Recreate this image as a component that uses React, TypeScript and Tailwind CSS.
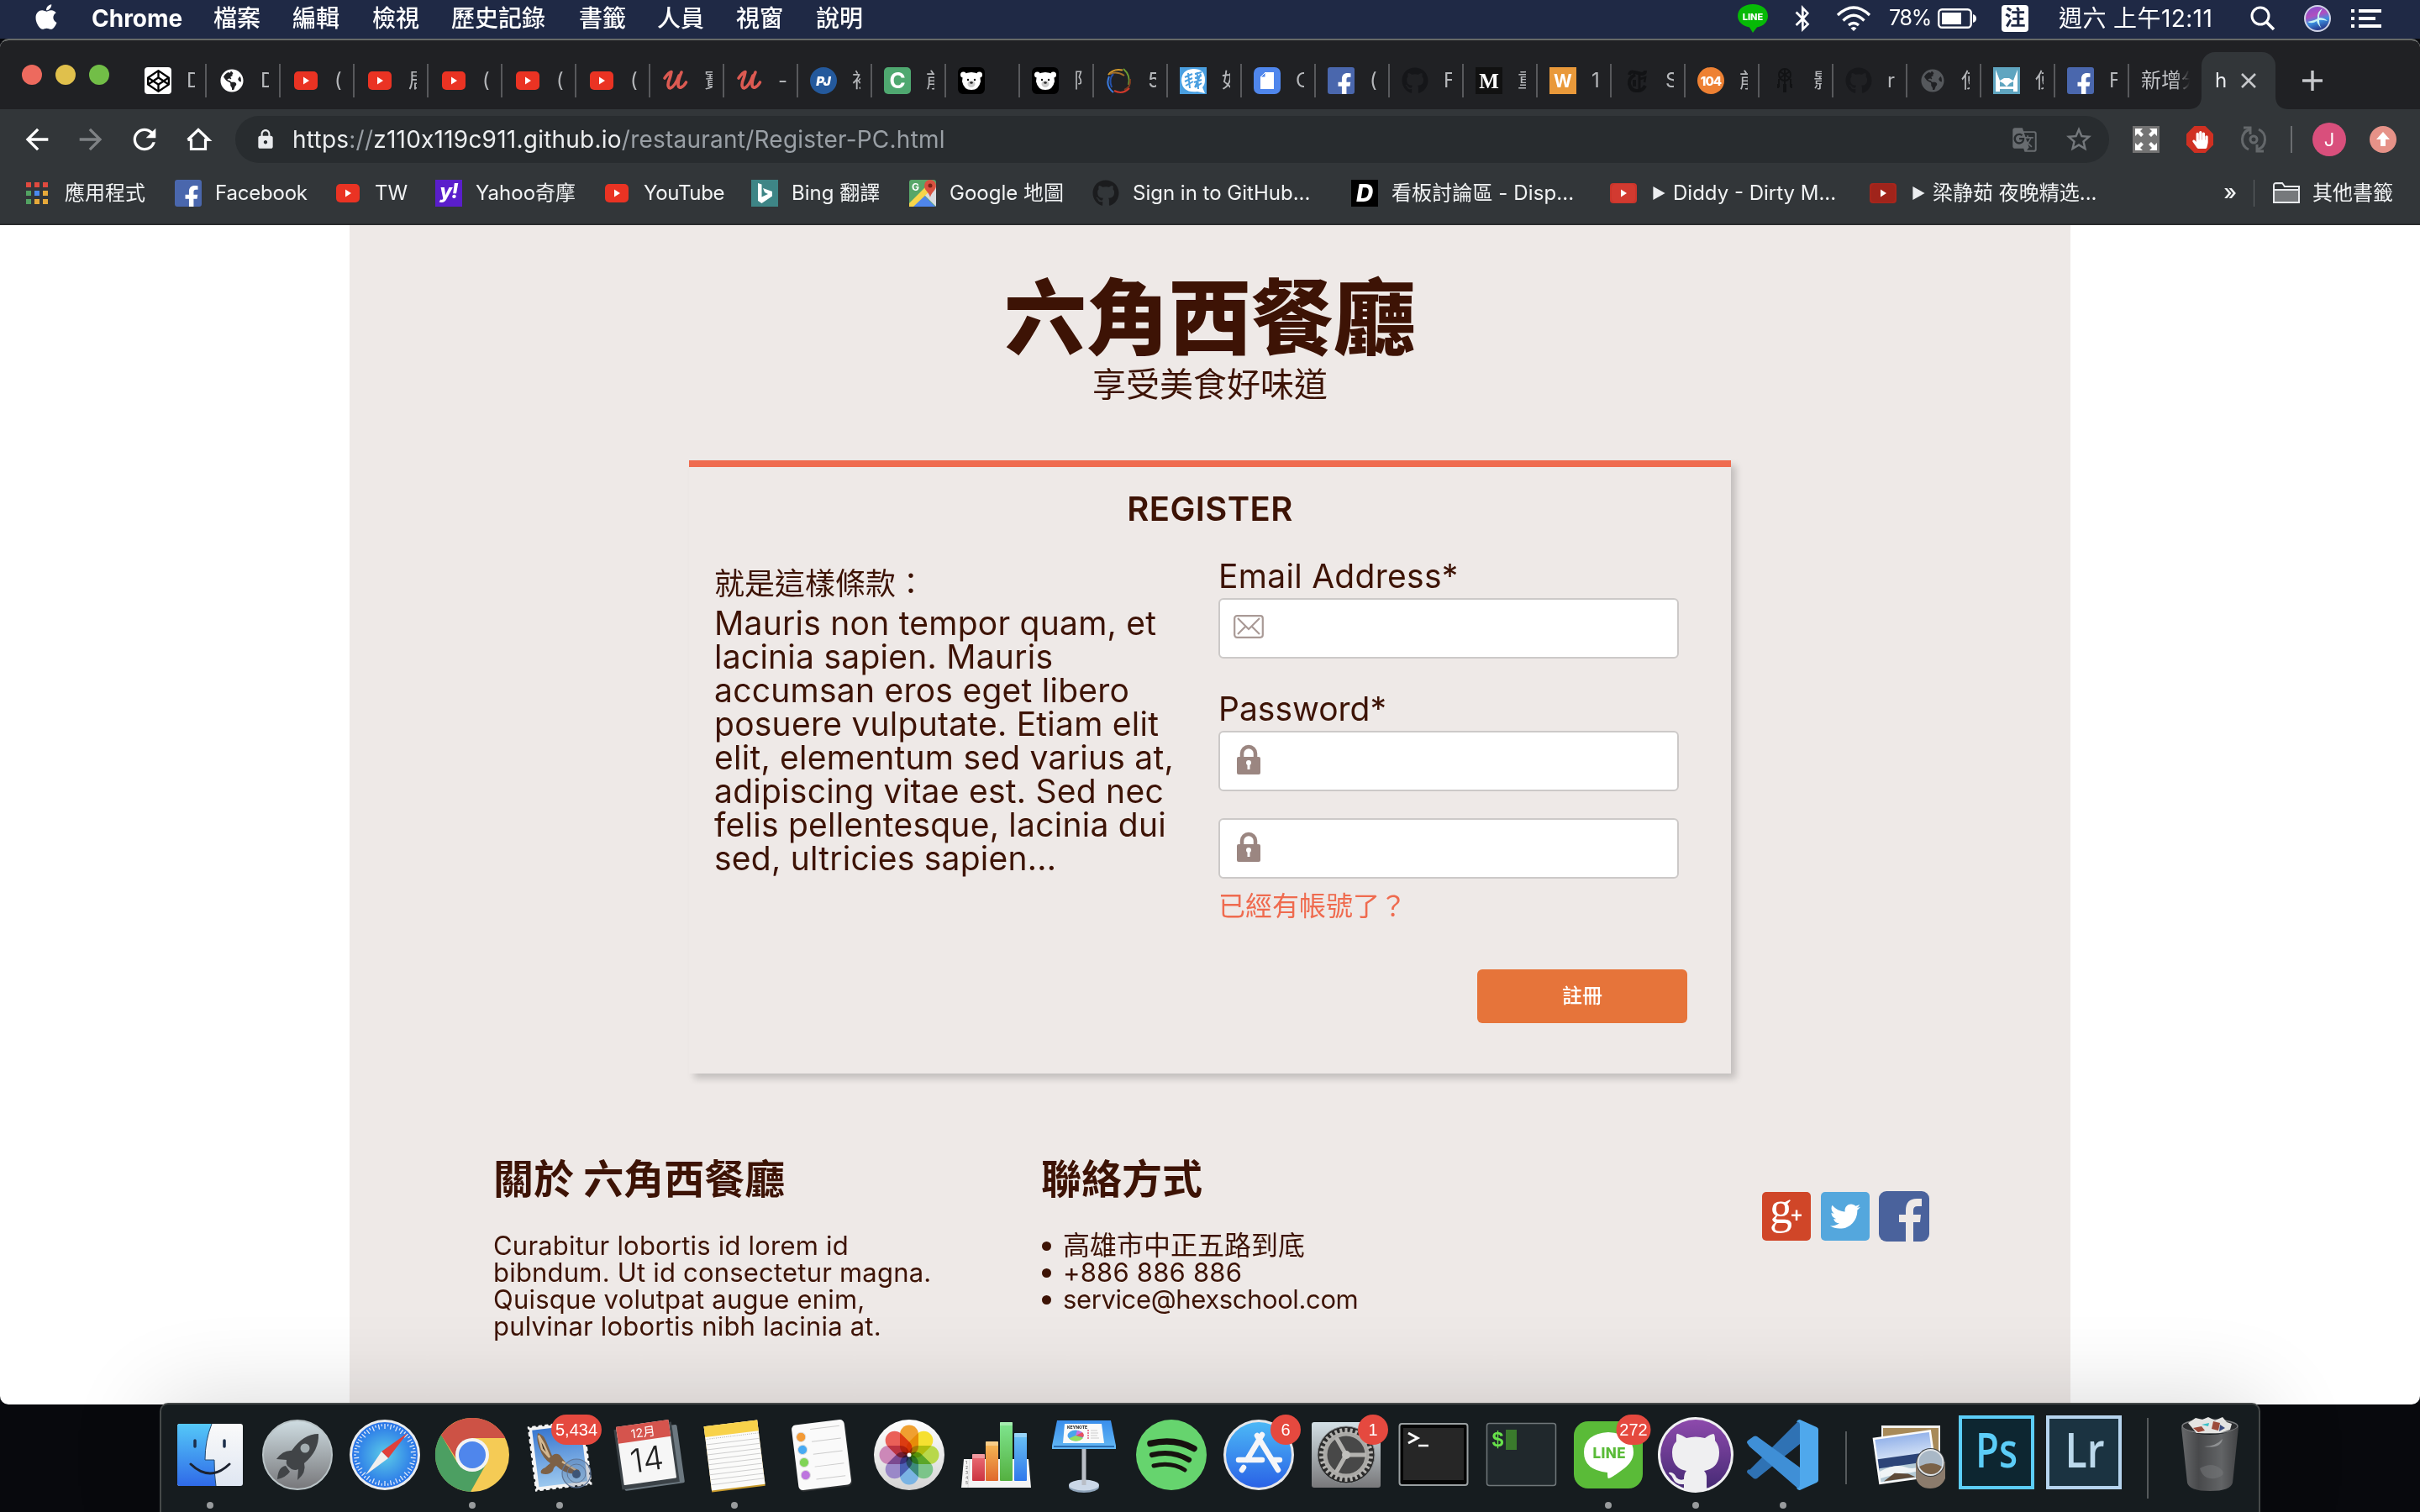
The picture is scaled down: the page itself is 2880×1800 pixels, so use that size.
import type { ReactNode } from "react";
import {
  FaApple,
  FaBluetoothB,
  FaCodepen,
  FaFacebookF,
  FaGithub,
  FaGlobeAmericas,
  FaHandPaper,
  FaTwitter,
} from "react-icons/fa";
import { MdArrowBack, MdArrowForward, MdGTranslate, MdLock, MdRefresh, MdStarBorder } from "react-icons/md";

/* ---------- small shared marks ---------- */

const YouTube = ({ fill = "#ea3323" }: { fill?: string }) => (
  <svg viewBox="0 0 28 22" className="h-[22px] w-[28px]">
    <rect width="28" height="22" rx="5" fill={fill} />
    <path d="M11 6.500v9l7-4.500z" fill="#fff" />
  </svg>
);

const FacebookMark = () => (
  <div className="flex h-8 w-8 items-end justify-center overflow-hidden rounded-[3px] bg-[#4a67ad]">
    <FaFacebookF className="-mb-[3px] ml-2 size-[28px] text-white" />
  </div>
);

const Bear = () => (
  <svg viewBox="0 0 32 32" className="size-8">
    <rect width="32" height="32" rx="6" fill="#000" />
    <circle cx="6.500" cy="9" r="3.500" fill="#fff" />
    <circle cx="25.500" cy="9" r="3.500" fill="#fff" />
    <path d="M6 9q10-6 20 0l1 8q-2 10-11 10T5 17z" fill="#fff" />
    <circle cx="12" cy="15" r="1.200" />
    <circle cx="20" cy="15" r="1.200" />
    <ellipse cx="16" cy="20" rx="4.500" ry="4" fill="#ccc" />
    <ellipse cx="16" cy="18.500" rx="1.800" ry="1.300" fill="#222" />
  </svg>
);

const Udemy = () => (
  <svg viewBox="0 0 32 32" className="size-8" fill="none" stroke="#dc5a52" strokeLinecap="round" strokeLinejoin="round">
    <path d="M3 13q5-7 8-7.500-1 6-3.500 12-1.500 7 2 7.500 6-2 10.500-15" strokeWidth="3.600" />
    <path d="M23 6q-4 9-4 15 .5 4 3.500 3 3.500-1.500 6-6" strokeWidth="3.600" />
  </svg>
);

const Letter = ({ c, cls }: { c: string; cls: string }) => (
  <span className={"flex h-8 w-8 items-center justify-center leading-none " + cls}>{c}</span>
);

const tabs: { icon: ReactNode; t: string }[] = [
  { icon: <div className="flex size-8 items-center justify-center rounded-[4px] bg-white"><FaCodepen className="size-[27px] text-black" /></div>, t: "D" },
  { icon: <FaGlobeAmericas className="size-[28px] text-white" />, t: "D" },
  { icon: <YouTube />, t: "(" },
  { icon: <YouTube />, t: "居" },
  { icon: <YouTube />, t: "(" },
  { icon: <YouTube />, t: "(" },
  { icon: <YouTube />, t: "(" },
  { icon: <Udemy />, t: "寶" },
  { icon: <Udemy />, t: "-" },
  { icon: <Letter c="PJ" cls="rounded-full bg-[#24599c] text-[15px] font-black italic text-white" />, t: "初" },
  { icon: <Letter c="C" cls="rounded-[5px] bg-[#4fa870] text-[26px] font-bold text-white" />, t: "前" },
  { icon: <Bear />, t: "" },
  { icon: <Bear />, t: "限" },
  {
    icon: (
      <svg viewBox="0 0 32 32" className="size-8" fill="none" strokeWidth="2">
        <path d="M3 9Q9 1 20 3.500" stroke="#d59b2c" />
        <path d="M5 8Q13 4 22 10" stroke="#a3702a" />
        <path d="M21 2q9 8 6 19" stroke="#6b9b32" />
        <path d="M29 14q1 10-7 13" stroke="#7a3a20" />
        <path d="M28 25q-8 8-18 3" stroke="#d0392b" />
        <path d="M9 30Q-1 22 4 11" stroke="#3a7be0" />
        <path d="M7 24Q3 14 9 8" stroke="#2450a8" />
      </svg>
    ),
    t: "5",
  },
  {
    icon: (
      <svg viewBox="0 0 32 32" className="size-8">
        <rect width="32" height="32" fill="#4a9fe0" />
        <path d="M2 16Q2 3 16 2q14 0 14 13 0 6-3 9l3 7-9-2Q3 31 2 16z" fill="#fff" />
        <g stroke="#4a9fe0" strokeWidth="2" fill="none">
          <path d="M6 12l9-4M6 17l9-4M7 22l9-5M10 7l2 18M18 8l8-2M18 13l8-3M17 18l9-3M18 24l8-5M21 6l1 20M25 8l-7 16" />
        </g>
      </svg>
    ),
    t: "如",
  },
  {
    icon: (
      <svg viewBox="0 0 32 32" className="size-8">
        <rect width="32" height="32" rx="7" fill="#4f86ec" />
        <path d="M14 6h10v20H8V12z" fill="#fff" />
        <path d="M8 12l6-6v6z" fill="#4f86ec" stroke="#fff" />
      </svg>
    ),
    t: "C",
  },
  { icon: <FacebookMark />, t: "(" },
  { icon: <FaGithub className="size-8 text-[#151619]" />, t: "F" },
  { icon: <Letter c="M" cls="bg-[#111] font-['Liberation_Serif',serif] text-[25px] font-bold text-white" />, t: "重" },
  { icon: <Letter c="W" cls="bg-[#e9993a] text-[21px] font-bold text-white" />, t: "1" },
  {
    icon: (
      <svg viewBox="0 0 32 32" className="size-8" fill="none" stroke="#121315" strokeWidth="4">
        <path d="M7 9q1-5 6-3l9 2q4 0 4-4" />
        <path d="M14 9q-8 4-7 11 2 9 10 8 6 0 9-6M13 15v8" />
        <path d="M19 8v20" strokeWidth="3" />
        <path d="M20 14l6-2-1 6" strokeWidth="2.500" />
      </svg>
    ),
    t: "S",
  },
  { icon: <Letter c="104" cls="rounded-full bg-[#ee8133] text-[15px] font-extrabold tracking-[-1px] text-white" />, t: "前" },
  {
    icon: (
      <svg viewBox="0 0 32 32" className="size-8" fill="none" stroke="#121315" strokeWidth="2">
        <circle cx="16" cy="9" r="7" />
        <path d="M10 5l12 8M10 13l12-8M16 2v28M9 14v10M23 14v10M8 20v5M24 20v5" />
        <path d="M16 20v10" strokeWidth="4" />
      </svg>
    ),
    t: "影",
  },
  { icon: <FaGithub className="size-8 text-[#17181b]" />, t: "r" },
  { icon: <FaGlobeAmericas className="size-[28px] text-[#55585c]" />, t: "使" },
  {
    icon: (
      <svg viewBox="0 0 32 32" className="size-8">
        <rect width="32" height="32" fill="#5fa5c0" />
        <path d="M3 3l5 13 5-3h6l5 3 5-13v26h-5v-3H8v3H3z" fill="#fff" />
        <path d="M8 17l4 2 4 4 4-4 4-2v6H8z" fill="#5fa5c0" />
      </svg>
    ),
    t: "使",
  },
  { icon: <FacebookMark />, t: "F" },
];

const menus: [string, string][] = [
  ["檔案", "w-[94px]"],
  ["編輯", "w-[95px]"],
  ["檢視", "w-[94px]"],
  ["歷史記錄", "w-[152px]"],
  ["書籤", "w-[93px]"],
  ["人員", "w-[94px]"],
  ["視窗", "w-[95px]"],
  ["說明", "w-[94px]"],
];

function MenuBar() {
  return (
    <header className="flex h-[46px] items-center bg-[#1f2945] pb-[2px] text-[28px] font-medium whitespace-nowrap text-white">
      <div className="w-[109px] pl-[40px]">
        <FaApple className="-mt-1 size-[34px] -translate-x-[2px]" />
      </div>
      <div className="w-[145px] font-bold">Chrome</div>
      {menus.map(([m, w]) => (
        <div key={m} className={w}>{m}</div>
      ))}
      <div className="grow" />
      <svg viewBox="0 0 36 36" className="mr-[28px] size-9">
        <path d="M18 1C8 1 0 6.500 0 15c0 7 6 12 14 13.500L18 35l5-6.500C31 27 36 22 36 15 36 6.500 28 1 18 1z" fill="#06b906" />
        <text x="18" y="19.500" textAnchor="middle" fontSize="11" fontWeight="800" fill="#fff">LINE</text>
      </svg>
      <FaBluetoothB className="mr-[27px] h-[32px] w-[26px]" />
      <svg viewBox="0 0 42 32" className="mr-[21px] h-8 w-[42px]" fill="none" stroke="#fff" strokeWidth="3.400">
        <path d="M2 12Q21-6 40 12M8.500 18.500Q21 6 33.500 18.500M15 24q6-5 12 0" />
        <path d="M17.500 27.500q3.500-3 7 0L21 31z" fill="#fff" stroke="none" />
      </svg>
      <span className="w-[58px] text-[25px] font-normal tracking-[-1.300px]">78%</span>
      <svg viewBox="0 0 46 24" className="mr-[30px] h-6 w-[46px]">
        <rect x="1.200" y="1.200" width="38.500" height="21.600" rx="4" fill="none" stroke="#fff" strokeWidth="2.400" />
        <rect x="5" y="5" width="23" height="14" fill="#fff" />
        <path d="M42 7q4 1 4 5t-4 5z" fill="#fff" />
      </svg>
      <span className="mr-[36px] flex h-8 w-8 items-center justify-center rounded-[4px] bg-white text-[25px] font-bold text-[#1f2945]">注</span>
      <span className="w-[228px] font-normal tracking-[0.400px]">週六 上午12:11</span>
      <svg viewBox="0 0 30 30" className="mr-[34px] size-[30px]" fill="none" stroke="#fff" strokeWidth="3">
        <circle cx="12" cy="12" r="10" />
        <path d="M19 19l9 9" strokeWidth="3.600" />
      </svg>
      <svg viewBox="0 0 32 32" className="mr-[24px] size-8">
        <defs>
          <linearGradient id="siri" x1="0" y1="0" x2="0.300" y2="1">
            <stop offset="0" stopColor="#7a4fd0" />
            <stop offset="0.450" stopColor="#b04fc0" />
            <stop offset="0.700" stopColor="#3a8fe0" />
            <stop offset="1" stopColor="#2a3f90" />
          </linearGradient>
        </defs>
        <circle cx="16" cy="16" r="15" fill="url(#siri)" stroke="#cfd3e6" strokeWidth="2" />
        <path d="M4 20q10-2 12-4Q15 8 22 4q-5 8-4 11 6 0 10 4-8-2-10-1 0 6 3 10-5-5-6-9-5 4-11 1z" fill="#c8f4f4" />
      </svg>
      <svg viewBox="0 0 36 22" className="mr-[46px] h-[22px] w-9" fill="#fff">
        <path d="M0 0h4v4H0zM9 0h27v4H9zM0 9h4v4H0zM9 9h20v4H9zM0 18h4v4H0zM9 18h27v4H9z" />
      </svg>
    </header>
  );
}

function TabStrip() {
  return (
    <div className="flex h-[82px] bg-[#202124] pt-[14px]">
      <div className="flex w-[158px] gap-4 pt-[15px] pl-[26px]">
        <i className="size-6 rounded-full bg-[#ed6a5e]" />
        <i className="size-6 rounded-full bg-[#e0c04c]" />
        <i className="size-6 rounded-full bg-[#72be47]" />
      </div>
      {tabs.map((t, i) => (
        <div key={i} className="flex h-[68px] w-[88px] items-center">
          <div className="flex w-[64px] items-center pl-[14px]">
            <div className="flex h-8 w-8 shrink-0 items-center justify-center">{t.icon}</div>
          </div>
          <div className="w-[10px] overflow-hidden text-[24px] whitespace-nowrap text-[#b5b7ba]">{t.t}</div>
          <div className="ml-[12px] h-10 w-[2px] bg-[#58595c]" />
        </div>
      ))}
      <div className="flex w-[86px] items-center pl-[14px]">
        <div className="w-[58px] overflow-hidden bg-gradient-to-r from-[#c4c6c9] from-70% to-transparent bg-clip-text text-[24px] whitespace-nowrap text-transparent">新增分</div>
      </div>
      <div className="relative flex w-[88px] items-center rounded-t-[16px] bg-[#323639]">
        <svg viewBox="0 0 16 16" className="absolute bottom-0 -left-4 size-4"><path d="M16 0v16H0Q16 16 16 0z" fill="#323639" /></svg>
        <svg viewBox="0 0 16 16" className="absolute -right-4 bottom-0 size-4"><path d="M0 0v16h16Q0 16 0 0z" fill="#323639" /></svg>
        <span className="ml-4 w-[31px] text-[24px] text-[#e8eaed]">h</span>
        <svg viewBox="0 0 18 18" className="size-[18px]" stroke="#c6c8cb" strokeWidth="2.600"><path d="M1 1l16 16M17 1L1 17" /></svg>
      </div>
      <svg viewBox="0 0 24 24" className="mt-[22px] ml-[32px] size-6" stroke="#c6c8cb" strokeWidth="3.400"><path d="M0 12h24M12 0v24" /></svg>
    </div>
  );
}

function Toolbar() {
  return (
    <div className="flex h-[72px] items-center bg-[#323639] pl-6 text-white">
      <MdArrowBack className="mr-6 size-10" />
      <MdArrowForward className="mr-6 size-10 text-[#7f8285]" />
      <MdRefresh className="mr-6 size-10" />
      <svg viewBox="0 0 40 40" className="mr-6 size-10" fill="none" stroke="#fff" strokeWidth="3.200">
        <path d="M11.500 19V31.500h17V19M7.500 20.500L20 8.500l12.500 12h-4M7.500 20.500h4" />
      </svg>
      <div className="flex h-14 w-[2230px] items-center rounded-full bg-[#282c2f]">
        <MdLock className="ml-[23px] size-[26px] text-[#e8eaed]" />
        <div className="ml-[19px] grow text-[28px] tracking-[0.230px] text-[#9aa0a6]">
          <span className="text-[#eceef0]">https</span>://<span className="text-[#eceef0]">z110x119c911.github.io</span>/restaurant/Register-PC.html
        </div>
        <MdGTranslate className="mr-[31px] size-[31px] text-[#686c70]" />
        <MdStarBorder className="mr-[18px] size-[36px] text-[#74787c]" />
      </div>
      <svg viewBox="0 0 32 32" className="ml-[28px] size-8">
        <rect width="32" height="32" fill="#737373" />
        <path d="M3 3h9l-3 3 4 4-3 3-4-4-3 3zM29 3v9l-3-3-4 4-3-3 4-4-3-3zM3 29v-9l3 3 4-4 3 3-4 4 3 3zM29 29h-9l3-3-4-4 3-3 4 4 3-3z" fill="#fff" />
      </svg>
      <div className="relative ml-8 flex size-8 items-center justify-center">
        <svg viewBox="0 0 32 32" className="absolute inset-0 size-8"><path d="M9.500 0h13L32 9.500v13L22.500 32h-13L0 22.500v-13z" fill="#d03022" /></svg>
        <FaHandPaper className="relative size-[21px] text-white" />
      </div>
      <svg viewBox="0 0 32 32" className="ml-8 size-8" fill="none" stroke="#64686b" strokeWidth="3">
        <path d="M11 4A13 13 0 0 0 10 28M21 28A13 13 0 0 0 22 4" />
        <path d="M4 2h8v8M28 30h-8v-8" />
        <circle cx="16" cy="16" r="4" />
      </svg>
      <div className="ml-[28px] h-8 w-[2px] bg-[#6a6d70]" />
      <div className="ml-6 flex size-10 items-center justify-center rounded-full bg-[#d94f7c] text-[22px]">J</div>
      <svg viewBox="0 0 32 32" className="ml-7 size-8">
        <circle cx="16" cy="16" r="16" fill="#e69288" />
        <path d="M16 7l8 9h-5v8h-6v-8H8z" fill="#fff" />
      </svg>
    </div>
  );
}

const AppsGrid = () => (
  <div className="grid w-[26px] grid-cols-3 gap-x-[4px] gap-y-[4px]">
    {["bg-[#e04a3f]", "bg-[#e04a3f]", "bg-[#e04a3f]", "bg-[#52a262]", "bg-[#4a8af0]", "bg-[#e6a93a]", "bg-[#52a262]", "bg-[#e6a93a]", "bg-[#e6a93a]"].map((c, i) => (
      <i key={i} className={"size-[6px] " + c} />
    ))}
  </div>
);

const Maps = () => (
  <svg viewBox="0 0 32 32" className="size-8">
    <rect width="32" height="32" rx="3" fill="#57a668" />
    <path d="M17 17L32 32V6z" fill="#d8dbe0" />
    <path d="M3 32l14-14 14 14z" fill="#4f86ec" />
    <path d="M0 32V28L20 8l4 6L5 32z" fill="#f7d54b" />
    <path d="M25 0a7 7 0 0 0-7 7c0 6 6 8 7 14 1-6 7-8 7-14a7 7 0 0 0-7-7z" fill="#d85140" />
    <circle cx="25" cy="7" r="2.500" fill="#7a2318" />
    <text x="3" y="13" fontSize="12" fontWeight="700" fill="#fff">G</text>
  </svg>
);

const bookmarks: { icon: ReactNode; t: string; w: string; tr?: string }[] = [
  { icon: <AppsGrid />, t: "應用程式", w: "w-[177px]", tr: "-ml-[2px]" },
  { icon: <FacebookMark />, t: "Facebook", w: "w-[192px]", tr: "tracking-[-0.200px]" },
  { icon: <YouTube />, t: "TW", w: "w-[118px]", tr: "-ml-[2px]" },
  { icon: <Letter c="y!" cls="bg-[#5a1ecb] text-[24px] font-extrabold tracking-[-1px] text-white italic pb-1" />, t: "Yahoo奇摩", w: "w-[202px]" },
  { icon: <YouTube />, t: "YouTube", w: "w-[174px]", tr: "-ml-[2px] tracking-[-0.300px]" },
  {
    icon: (
      <svg viewBox="0 0 32 32" className="size-8">
        <rect width="32" height="32" fill="#3e8586" />
        <path d="M8 4l4.500 1.500v15L20 17l-4-2-2-5 11 4v5.500L12.500 28 8 25z" fill="#fff" />
      </svg>
    ),
    t: "Bing 翻譯",
    w: "w-[188px]",
  },
  { icon: <Maps />, t: "Google 地圖", w: "w-[218px]" },
  { icon: <FaGithub className="size-8 text-[#1b1c1e]" />, t: "Sign in to GitHub...", w: "w-[308px]" },
  { icon: <Letter c="D" cls="bg-black text-[28px] font-extrabold text-white italic" />, t: "看板討論區 - Disp...", w: "w-[308px]", tr: "tracking-[0.100px]" },
  { icon: <div className="flex h-[24px] w-8 items-center justify-center rounded-[4px] bg-[#c9352b]"><YouTube fill="#d23a30" /></div>, t: "▶ Diddy - Dirty M...", w: "w-[309px]" },
  { icon: <div className="flex h-[24px] w-8 items-center justify-center rounded-[4px] bg-[#a8261c]"><YouTube fill="#a0241b" /></div>, t: "▶ 梁静茹 夜晚精选...", w: "w-[300px]" },
];

function BookmarkBar() {
  return (
    <div className="flex h-[66px] border-b-2 border-[#292b2d] bg-[#323639] pb-2 pl-[31px] text-[24px] whitespace-nowrap text-[#f1f3f4]">
      {bookmarks.map((b) => (
        <div key={b.t} className={"flex shrink-0 items-center " + b.w}>
          <div className="flex w-12 shrink-0 items-center">{b.icon}</div>
          {b.t[0] === "▶" ? (
            <>
              <svg viewBox="0 0 16 18" className="mr-[8px] ml-[2px] h-[16px] w-[17px] shrink-0"><path d="M0 0l16 9-16 9z" fill="#eceef0" /></svg>
              <span>{b.t.slice(2)}</span>
            </>
          ) : (
            <span className={b.tr}>{b.t}</span>
          )}
        </div>
      ))}
      <div className="flex grow items-center">
        <span className="ml-auto pb-1 text-[26px] font-medium">»</span>
        <div className="ml-[20px] h-8 w-[1px] bg-[#606366]" />
        <svg viewBox="0 0 32 26" className="ml-[22px] h-[26px] w-8" fill="#76797c" stroke="#e8eaed" strokeWidth="2">
          <path d="M1 24V4q0-3 3-3h7l3 4h17v19z" />
          <path d="M1 9h30" />
          <path d="M2 2.500h9l2 3.500H30v2H2z" fill="#323639" stroke="none" />
        </svg>
        <span className="mr-[32px] ml-[15px]">其他書籤</span>
      </div>
    </div>
  );
}

/* ---------- page ---------- */

const Lock = () => (
  <svg viewBox="0 0 32 36" className="h-9 w-8">
    <path d="M8 17v-6a8 8 0 0 1 16 0v6" fill="none" stroke="#9b8681" strokeWidth="4.500" />
    <rect x="2" y="15" width="28" height="21" rx="2" fill="#9b8681" />
    <circle cx="16" cy="22" r="3" fill="#fff" />
    <path d="M14.500 22h3v8h-3z" fill="#fff" />
  </svg>
);

const Field = ({ children, label }: { children: ReactNode; label: string }) => (
  <div className="relative h-[72px] w-[548px]">
    <input aria-label={label} className="h-full w-full rounded-[6px] border-2 border-[#ccc9c8] bg-white pl-[70px] text-[32px]" />
    <div className="absolute top-[16px] left-[16px] flex h-9 w-[40px] items-center justify-center">{children}</div>
  </div>
);

function RegisterCard() {
  return (
    <section className="mt-[70px] h-[730px] w-[1240px] border-t-8 border-[#ef6b4f] pt-[29px] shadow-[6px_6px_8px_rgba(0,0,0,0.18)]">
      <h2 className="text-center text-[40px] leading-[42px] font-semibold tracking-[0.400px]">REGISTER</h2>
      <div className="mt-[39px] flex pl-[30px]">
        <div className="w-[600px] pt-[11px]">
          <p className="text-[36px] leading-9">就是這樣條款：</p>
          <p className="mt-[9px] text-[39px] leading-10 tracking-[0.250px] whitespace-nowrap">
            Mauris non tempor quam, et<br />lacinia sapien. Mauris<br />accumsan eros eget libero<br />posuere vulputate. Etiam elit<br />elit, elementum sed varius at,<br />adipiscing vitae est. Sed nec<br />felis pellentesque, lacinia dui<br />sed, ultricies sapien...
          </p>
        </div>
        <form className="w-[558px]">
          <label className="mb-[6px] block text-[39px] leading-10 tracking-[0.300px]">Email Address*</label>
          <Field label="Email">
            <svg viewBox="0 0 36 28" className="h-7 w-9" fill="none" stroke="#a99a96" strokeWidth="2.200">
              <rect x="1.200" y="1.200" width="33.600" height="25.600" rx="3" />
              <path d="M5 4l13 13L31 4M5 23l9-9M31 23l-9-9" />
            </svg>
          </Field>
          <label className="mt-10 mb-[6px] block text-[39px] leading-10">Password*</label>
          <Field label="Password"><Lock /></Field>
          <div className="mt-8"><Field label="Confirm password"><Lock /></Field></div>
          <a className="mt-[17px] block text-[32px] leading-8 text-[#ef6b4f]">已經有帳號了？</a>
          <button type="button" className="mt-[59px] ml-auto block h-16 w-[250px] rounded-[6px] bg-[#e6743a] text-[24px] font-medium text-white">註冊</button>
        </form>
      </div>
    </section>
  );
}

function SiteFooter() {
  return (
    <footer className="mt-[102px] flex w-full pl-[171px]">
      <div className="w-[652px]">
        <h3 className="text-[48px] leading-[48px] font-bold">關於 六角西餐廳</h3>
        <p className="mt-[39px] text-[31px] leading-8 tracking-[0.200px] whitespace-nowrap">
          Curabitur lobortis id lorem id<br />bibndum. Ut id consectetur magna.<br />Quisque volutpat augue enim,<br />pulvinar lobortis nibh lacinia at.
        </p>
      </div>
      <div className="w-[858px]">
        <h3 className="text-[48px] leading-[48px] font-bold">聯絡方式</h3>
        <ul className="mt-[39px] leading-8 whitespace-nowrap">
          {[
            ["高雄市中正五路到底", "text-[32px]"],
            ["+886 886 886", "text-[31px] tracking-[0.200px]"],
            ["service@hexschool.com", "text-[31px] tracking-[-0.380px]"],
          ].map(([t, c]) => (
            <li key={t} className="flex h-8 items-center">
              <i className="mr-[14px] ml-[1px] size-[11px] rounded-full bg-[#3d1305]" />
              <span className={c}>{t}</span>
            </li>
          ))}
        </ul>
      </div>
      <div className="mt-[38px] flex h-[60px] items-center">
        <div className="mr-3 h-[58px] w-[58px] rounded-[5px] bg-[#d04628]">
          <svg viewBox="0 0 58 58" className="size-[58px]" fill="#fff">
            <text x="9" y="37" fontSize="54" fontFamily="Liberation Serif">g</text>
            <path d="M35 26.500h12v2.500H35zM39.800 21.500h2.500v12.500h-2.500z" />
          </svg>
        </div>
        <div className="mr-[11px] flex size-[58px] items-center justify-center rounded-[5px] bg-[#54a7dd]">
          <FaTwitter className="size-9 text-white" />
        </div>
        <svg viewBox="0 0 60 60" className="size-[60px]">
          <rect width="60" height="60" rx="9" fill="#4a629c" />
          <path d="M32 60V37h-8v-9h8v-5q0-14 13-14h6v9h-5q-5 0-5 5v5h9l-1 9h-8v23z" fill="#eee9e7" />
        </svg>
      </div>
    </footer>
  );
}

/* ---------- dock ---------- */

const Slot = ({ children, dot = false, badge, bx = 84, bw = 36 }: { children: ReactNode; dot?: boolean; badge?: string; bx?: number; bw?: number }) => (
  <svg viewBox="0 0 104 128" className="h-[128px] w-[104px] shrink-0">
    {children}
    {badge && (
      <g>
        <rect x={bx - bw / 2} y="12" width={bw} height="36" rx="18" fill="#e5493f" />
        <text x={bx} y="37" textAnchor="middle" fontSize="20" fontFamily="Liberation Sans" fill="#fff">{badge}</text>
      </g>
    )}
    {dot && <circle cx="52" cy="120" r="4" fill="#989b9d" />}
  </svg>
);

const G = ({ id, a, b }: { id: string; a: string; b: string }) => (
  <linearGradient id={id} x1="0" y1="0" x2="0" y2="1">
    <stop offset="0" stopColor={a} />
    <stop offset="1" stopColor={b} />
  </linearGradient>
);

const petals = ["#f0a030", "#f6e030", "#b8d84a", "#7cc48a", "#7ab4e4", "#9a88c8", "#cc88b8", "#ea6058"];
const ticks = Array.from({ length: 60 }, (_, i) => i * 6);
const teeth = Array.from({ length: 30 }, (_, i) => i * 12);
const perf = Array.from({ length: 9 }, (_, i) => i);

function Dock() {
  return (
    <div className="relative mx-auto -mt-[2px] flex h-[130px] w-[2500px] rounded-t-[10px] border-x-2 border-t-2 border-[#454949] bg-[#161c1f] pl-[6px] shadow-[0_0_110px_rgba(0,0,0,0.16)]">
      <Slot dot>
        <defs>
          <G id="f1" a="#54c8f8" b="#2f6ae8" />
          <G id="f2" a="#fafafa" b="#dfe6f2" />
        </defs>
        <rect x="13" y="23" width="78" height="74" rx="3" fill="url(#f2)" />
        <path d="M16 23h38q-8 20-8 43h11q0 18 2 31H16q-3 0-3-3V26q0-3 3-3z" fill="url(#f1)" />
        <path d="M54 23q-8 20-8 43h11q0 18 2 31" fill="none" stroke="#23486e" strokeWidth="1" />
        <path d="M34 43v7M69 43v7" stroke="#1c2e4a" strokeWidth="3.500" strokeLinecap="round" />
        <path d="M29 71q23 22 46 0" fill="none" stroke="#1c2230" strokeWidth="3" strokeLinecap="round" />
      </Slot>
      <Slot>
        <defs><G id="lp" a="#cfdde2" b="#77777a" /></defs>
        <circle cx="52" cy="60" r="41" fill="url(#lp)" stroke="#b9c3c6" strokeWidth="2" />
        <path d="M77 35q-18 0-32 20-10-1-18 10l12 1q-1 4 1 7l5 4q5 2 8 0l-1 13q11-9 8-20 18-15 17-35z" fill="#414447" />
        <path d="M38 73q-9 1-10 16 10-2 15-9z" fill="#414447" />
        <circle cx="61" cy="52" r="5.500" fill="#a3adb0" />
      </Slot>
      <Slot>
        <defs>
          <radialGradient id="sf"><stop offset="0" stopColor="#5ccce8" /><stop offset="1" stopColor="#2873e8" /></radialGradient>
        </defs>
        <circle cx="52" cy="60" r="42" fill="#e9ebee" />
        <circle cx="52" cy="60" r="39" fill="url(#sf)" />
        {ticks.map((a) => (
          <path key={a} d={a % 12 ? "M52 23v3" : "M52 23v6"} stroke="#dfe9f8" strokeWidth="1.300" transform={`rotate(${a} 52 60)`} />
        ))}
        <path d="M79 34L48 56l8 8z" fill="#e0403a" />
        <path d="M29 84l19-28 8 8z" fill="#f1efee" />
      </Slot>
      <Slot dot>
        <circle cx="52" cy="60" r="44" fill="#f5cb55" />
        <path d="M52 60L34 69 15 36a44 44 0 0 0 35 68L69 70z" fill="#4c9f62" />
        <path d="M15 36.500A44 44 0 0 1 91.500 40H52L34 66z" fill="#cd5245" />
        <circle cx="52" cy="60" r="20" fill="#f3f3f3" />
        <circle cx="52" cy="60" r="16" fill="#4f86ec" />
      </Slot>
      <Slot dot badge="5,434" bx={72} bw={60}>
        <defs><G id="ml" a="#3a78d0" b="#9cc8ee" /></defs>
        <g transform="rotate(-7 52 60)">
          <rect x="18" y="22" width="68" height="78" fill="#f4f4f4" />
          {perf.map((i) => (
            <g key={i} fill="#161c1f">
              <circle cx={22 + i * 7.5} cy="22" r="1.800" />
              <circle cx={22 + i * 7.5} cy="100" r="1.800" />
              <circle cx="18" cy={27 + i * 8.5} r="1.800" />
              <circle cx="86" cy={27 + i * 8.5} r="1.800" />
            </g>
          ))}
          <rect x="23" y="27" width="58" height="68" fill="url(#ml)" />
        </g>
        <path d="M26 34q7 2 10 10l7 17q4-4 9-1 3 4 8 10 6 5 15 8 2 4-4 5-14-1-23-10-3 1-4 6-5 6-14 3-2-4 5-7 3-3 6-5-9-6-13-18-4-10-2-18z" fill="#7d6146" />
        <path d="M27 37l4 16 9 10-7-16zM55 68l16 10" stroke="#d3b892" strokeWidth="2.500" fill="#3c2c1e" />
        <circle cx="72" cy="82" r="17" fill="#3a4a68" fillOpacity="0.200" stroke="#5f7596" strokeWidth="1.200" />
        <circle cx="72" cy="82" r="11" fill="none" stroke="#5f7596" />
        <circle cx="72" cy="83" r="5" fill="#3d5576" />
      </Slot>
      <Slot>
        <g transform="rotate(-8 52 60)">
          <rect x="20" y="29" width="72" height="70" rx="2" fill="#6c7880" />
          <rect x="17" y="25" width="69" height="72" fill="#3b4247" />
          <rect x="20" y="22" width="63" height="70" rx="1" fill="#f6f6f6" />
          <path d="M20 22h63v20H20z" fill="#d5544d" />
          <text x="51" y="38" textAnchor="middle" fontSize="14.500" fill="#fff">12月</text>
          <text x="51" y="79" textAnchor="middle" fontSize="39" fontWeight="300" fill="#222">14</text>
        </g>
      </Slot>
      <Slot dot>
        <g transform="rotate(-7 52 60)">
          <rect x="20" y="22" width="64" height="79" fill="#c99b2c" />
          <rect x="20" y="22" width="64" height="77" fill="#fbfbfa" />
          <path d="M20 22h64v13H20z" fill="#f8d24a" />
          <path d="M20 37.500h64" stroke="#aaa" strokeDasharray="1 1.500" />
          <path d="M20 44h64M20 50h64M20 56h64M20 62h64M20 68h64M20 74h64M20 80h64M20 86h64M20 92h64" stroke="#cfcfcf" />
        </g>
      </Slot>
      <Slot>
        <g transform="rotate(-7 52 60)">
          <rect x="21" y="24" width="63" height="77" rx="5" fill="#2a2e30" />
          <rect x="20" y="21" width="63" height="78" rx="5" fill="#fafafa" />
          <path d="M42 28h35M42 43h35M42 58h35M42 73h35M42 88h35" stroke="#ccc" />
          {["#f39a36", "#48aaf3", "#80d456", "#bd76de"].map((c, i) => (
            <circle key={c} cx="30" cy={36 + i * 15.2} r="5.600" fill={c} stroke="#ddd" strokeWidth="1" />
          ))}
        </g>
      </Slot>
      <Slot>
        <defs><G id="ph" a="#ffffff" b="#d4d4d4" /></defs>
        <circle cx="52" cy="60" r="42" fill="url(#ph)" />
        <g className="isolate">
          {petals.map((c, i) => (
            <rect key={c} x="41" y="24.500" width="22" height="36" rx="11" fill={c} className="mix-blend-multiply" transform={`rotate(${i * 45} 52 60)`} />
          ))}
        </g>
        <circle cx="52" cy="60" r="2.500" fill="#fff" />
      </Slot>
      <Slot>
        <defs>
          <G id="n1" a="#ec7078" b="#cc3440" />
          <G id="n2" a="#f6bc58" b="#e0682c" />
          <G id="n3" a="#80e690" b="#54b040" />
          <G id="n4" a="#6cc4f4" b="#2f78ec" />
        </defs>
        <path d="M13 65h77l3 34H10z" fill="#f4f4f4" />
        <path d="M20 65l-2 34" stroke="#ddd" />
        {[1, 2, 3, 4, 5].map((n) => (
          <text key={n} x="15" y={65 + n * 6} fontSize="5" fill="#666">{n}</text>
        ))}
        <rect x="23" y="59" width="15" height="32" rx="1" fill="url(#n1)" />
        <rect x="39" y="44" width="15" height="47" rx="1" fill="url(#n2)" />
        <rect x="56" y="21" width="15" height="70" rx="1" fill="url(#n3)" />
        <rect x="73" y="34" width="15" height="57" rx="1" fill="url(#n4)" />
        <path d="M23 59h15v5H23zM39 44h15v5H39zM56 21h15v4H56zM73 34h15v5H73z" fill="#fff" fillOpacity="0.300" />
      </Slot>
      <Slot>
        <defs><G id="kn" a="#3a8eec" b="#62b8f4" /></defs>
        <ellipse cx="52" cy="98" rx="18" ry="7" fill="#8ea3b8" />
        <ellipse cx="52" cy="96" rx="18" ry="6.500" fill="#cbd8e8" />
        <path d="M49.500 52h5v44h-5z" fill="#b9bec6" />
        <path d="M20 19h64l6 30v4H14v-4z" fill="url(#kn)" />
        <path d="M16 49h72v2H16z" fill="#2a6cb0" />
        <path d="M29 23h44l3 23H27z" fill="#fafafa" />
        <text x="32" y="28.500" fontSize="5" fontWeight="800" textLength="24" fill="#333">KEYNOTE</text>
        <ellipse cx="42" cy="37" rx="9.500" ry="6.500" fill="#4aa4ec" />
        <path d="M42 37l8-4q3 3 1 6z" fill="#ea5060" />
        <path d="M42 37l9 3q-4 4-9 3.500t-8-3z" fill="#94de60" />
        <path d="M42 37l2-6 6 2z" fill="#d070e0" />
        <path d="M56 31h2M56 34h2M56 37h2M56 40h2" stroke="#e06080" strokeWidth="1.500" />
        <path d="M60 31h8M60 34h9M60 37h8M60 40h10" stroke="#ccc" />
      </Slot>
      <Slot>
        <circle cx="52" cy="60" r="42" fill="#66d46e" />
        <g fill="none" stroke="#17120f" strokeLinecap="round">
          <path d="M27 46.500q29-7 52 6" strokeWidth="7.500" />
          <path d="M29 60q24-6 44 6" strokeWidth="6.200" />
          <path d="M31 73q21-5 37 5" strokeWidth="5" />
        </g>
      </Slot>
      <Slot badge="6">
        <defs><G id="as" a="#4cb8f6" b="#2a62e6" /></defs>
        <circle cx="52" cy="60" r="42" fill="#e6e6e8" />
        <circle cx="52" cy="60" r="39" fill="url(#as)" />
        <g stroke="#f6f6f8" strokeWidth="6.500" strokeLinecap="round">
          <path d="M56 36L38 66M50 37l25 41M28 66h28M70 66h7M34 75l-2 3" />
        </g>
      </Slot>
      <Slot badge="1">
        <defs><G id="pf" a="#d3e0e6" b="#78787a" /></defs>
        <rect x="11" y="21" width="82" height="78" rx="3" fill="url(#pf)" />
        <circle cx="52" cy="60" r="34" fill="#2b2b2b" stroke="#8a8f92" />
        <circle cx="52" cy="60" r="25" fill="#484848" stroke="#aaa9a6" strokeWidth="5" />
        {teeth.map((a) => (
          <path key={a} d="M52 28v6" stroke="#b4b3b0" strokeWidth="3" transform={`rotate(${a} 52 60)`} />
        ))}
        <path d="M52 60h24M52 60L40 39M52 60L40 81" stroke="#b4b3b0" strokeWidth="5" />
        <circle cx="52" cy="60" r="5" fill="#c2c1be" />
      </Slot>
      <Slot>
        <rect x="11.500" y="23" width="81" height="73" rx="3" fill="#050505" stroke="#9aa0a2" strokeWidth="2" />
        <rect x="16" y="28" width="72" height="62" fill="#262626" />
        <path d="M22 34l11 6-11 6" fill="none" stroke="#fff" strokeWidth="3" />
        <path d="M34 49h12" stroke="#fff" strokeWidth="2.500" />
      </Slot>
      <Slot>
        <rect x="11.500" y="22.500" width="82" height="74" rx="3" fill="#20282c" stroke="#70777a" strokeWidth="1.500" />
        <text x="17" y="50" fontSize="25" fontFamily="Liberation Mono" fontWeight="700" fill="#67e24a">$</text>
        <rect x="34" y="30" width="13" height="24" fill="#3a7a2c" />
      </Slot>
      <Slot dot badge="272" bx={82} bw={41}>
        <rect x="11" y="20" width="82" height="80" rx="17" fill="#5abb38" />
        <path d="M52 33q30 2 30 24 0 12-15 22-12 9-15 9-1 0-1-7-28-3-28-24 0-22 29-24z" fill="#fff" />
        <text x="53" y="64" textAnchor="middle" fontSize="17" fontWeight="800" textLength="39" fill="#5abb38">LINE</text>
      </Slot>
      <Slot dot>
        <defs><G id="gh" a="#8d4aac" b="#452a74" /></defs>
        <circle cx="52" cy="60" r="45" fill="#f0f0f2" />
        <circle cx="52" cy="60" r="42" fill="url(#gh)" />
        <path d="M29 38q0-4 2-3 6 2 10 5 11-3 22 0 5-4 10-5 2 0 2 8 5 6 5 14 0 19-18 22 3 3 3 8v14q-6 3-13 3t-14-3v-6q-10 1-13-7-2-4-5-6 0-2 3-1 4 1 6 6 4 4 9 2 0-7 3-10-17-3-17-22 0-8 5-13z" fill="#efeff1" />
      </Slot>
      <Slot dot>
        <path d="M72 18L12 78v-1l-2 1q-2 2 0 4l7 6q2 1 4 0l51-41z" fill="#2f72b4" />
        <path d="M10 47q-2-2 0-4l7-5q2-1 4 0l51 37v27L12 50z" fill="#3f8fd6" />
        <path d="M72 18l20 9q2 1 2 3v60q0 2-2 3l-20 9q-3 0-4-3 4 1 4-4V25q0-5-4-4 1-3 4-3z" fill="#4fa8ec" />
      </Slot>
      <div className="w-[46px] pt-8"><div className="mx-auto h-[63px] w-[2px] bg-[#55595b]" /></div>
      <Slot>
        <defs><G id="pv" a="#96b4ea" b="#d4e2f6" /></defs>
        <rect x="19" y="25" width="70" height="60" fill="#f2f2f0" />
        <rect x="21" y="28" width="66" height="54" fill="#a88a58" />
        <g transform="rotate(-8 45 62)">
          <rect x="12" y="35" width="70" height="56" fill="#fafafa" />
          <rect x="14.500" y="37.500" width="65" height="26" fill="url(#pv)" />
          <rect x="14.500" y="61" width="65" height="13" fill="#2c4478" />
          <rect x="14.500" y="72" width="65" height="16.500" fill="#b4cad6" />
          <path d="M14.500 76q20-8 32-1t33-4v6q-20 6-33 5t-32 2z" fill="#f0f4f6" />
          <path d="M18 88l14-8 16 3 8 5z" fill="#5e4a38" />
        </g>
        <path d="M60 68v20q4 12 17 12t18-12V68z" fill="#8b7b6c" />
        <circle cx="77.500" cy="69" r="17" fill="#3d4042" />
        <circle cx="77.500" cy="69" r="15" fill="#a9b8c6" stroke="#dfe3e6" strokeWidth="2" />
        <path d="M64 74q14-8 27 0-4 9-13 9t-14-9z" fill="#7a6248" />
      </Slot>
      <Slot>
        <rect x="9" y="15" width="86" height="84" fill="#0d2631" stroke="#5ccdf8" strokeWidth="4" />
        <text x="52" y="75" textAnchor="middle" fontSize="57" fontFamily="Open Sans" fontWeight="600" textLength="50" lengthAdjust="spacingAndGlyphs" fill="#5ccdf8">Ps</text>
      </Slot>
      <Slot>
        <rect x="9" y="15" width="86" height="84" fill="#1b3341" stroke="#b6d4ee" strokeWidth="4" />
        <text x="53" y="75" textAnchor="middle" fontSize="57" fontFamily="Open Sans" fontWeight="600" textLength="47" lengthAdjust="spacingAndGlyphs" fill="#bcd9ec">Lr</text>
      </Slot>
      <div className="w-[46px] pt-4 pl-[2px]"><div className="mx-auto h-[96px] w-[2px] bg-[#55595b]" /></div>
      <Slot>
        <defs>
          <linearGradient id="tr"><stop offset="0" stopColor="#67696b" /><stop offset="0.300" stopColor="#48494b" /><stop offset="0.700" stopColor="#626466" /><stop offset="1" stopColor="#424345" /></linearGradient>
        </defs>
        <ellipse cx="52" cy="26" rx="33" ry="8" fill="#2c2e30" stroke="#7c7e80" strokeWidth="1.500" />
        <path d="M26 22l9-6 8 2 7-3 8 4 9-4 5 6 6 2-2 7-12 4H36z" fill="#e4e4e2" />
        <path d="M32 28l10-2 4 5-8 2zM56 20l8 2-2 9-8-2z" fill="#9c4a3a" />
        <path d="M42 24l9-2-1 4z" fill="#3cc0c8" />
        <path d="M64 24l6 4-7 4z" fill="#3a4c80" />
        <path d="M18 27q14 9 34 9t34-9l-7 66q-2 10-27 10T25 93z" fill="url(#tr)" />
        <path d="M45 50q14 0 22-9-2 12-22 9z" fill="#909294" />
        <path d="M40 76q14-8 24 0t-6 12q-14 2-18-12z" fill="#77797b" fillOpacity="0.500" />
      </Slot>
    </div>
  );
}

export default function App() {
  return (
    <div className="h-[1800px] w-[2880px] overflow-hidden bg-[#08090d] font-['Inter','Noto_Sans_CJK_TC',sans-serif]">
      <MenuBar />
      <div className="h-[1626px] overflow-hidden rounded-t-[10px] rounded-b-[10px] border-t-2 border-[#666967] bg-white">
        <TabStrip />
        <Toolbar />
        <BookmarkBar />
        <main className="mx-auto flex h-[1404px] w-[2048px] flex-col items-center bg-[#eee9e7] pt-[62px] text-[#3d1305]">
          <h1 className="text-[98px] leading-[98px] font-black">六角西餐廳</h1>
          <p className="mt-[10px] text-[40px] leading-10">享受美食好味道</p>
          <RegisterCard />
          <SiteFooter />
        </main>
      </div>
      <Dock />
    </div>
  );
}
